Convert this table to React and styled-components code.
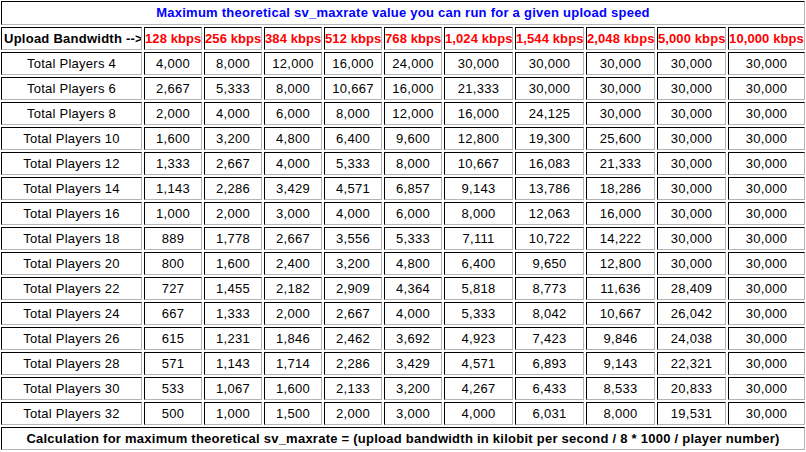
import React from 'react';
import styled, { createGlobalStyle } from 'styled-components';

const GlobalStyle = createGlobalStyle`
  html, body {
    margin: 0;
    padding: 0;
    background: #fff;
    overflow: hidden;
  }
`;

const Sheet = styled.table`
  border-collapse: separate;
  border-spacing: 2px;
  table-layout: fixed;
  width: 808px;
  margin: -1px;
  font-family: "Liberation Sans", Arial, sans-serif;
  font-size: 13px;
  line-height: 15px;
  letter-spacing: 0.25px;
`;

const Col = styled.col`
  width: ${(p) => p.$w}px;
`;

const Cell = styled.td`
  border: 1px solid;
  border-color: #000 #b4b4b4 #b4b4b4 #000;
  padding: 3px 1px;
  text-align: center;
  color: #000;
  white-space: nowrap;
  overflow: hidden;
`;

const TitleCell = styled(Cell)`
  color: #0000ff;
  font-weight: bold;
  padding: 3px 1px 4px;
`;

const HeadCell = styled(Cell)`
  font-weight: bold;
  color: ${(p) => (p.$rate ? '#ff0000' : '#000')};
  text-align: ${(p) => (p.$rate ? 'center' : 'left')};
  padding-left: ${(p) => (p.$rate ? 0 : 2)}px;
  padding-right: ${(p) => (p.$rate ? 0 : 1)}px;
  letter-spacing: ${(p) => (p.$rate ? 0.1 : 0.25)}px;
`;

const FootCell = styled(Cell)`
  font-weight: bold;
`;

// upload speeds in kbps and the widths their columns take
const rates = [128, 256, 384, 512, 768, 1024, 1544, 2048, 5000, 10000];
const widths = [141, 58, 58, 58, 58, 58, 69, 69, 69, 69, 77];
const players = [4, 6, 8, 10, 12, 14, 16, 18, 20, 22, 24, 26, 28, 30, 32];

const fmt = (n) => String(n).replace(/\B(?=(\d{3})+(?!\d))/g, ',');

const maxrate = (kbps, count) => Math.min(30000, Math.round((kbps * 1000) / 8 / count));

export default function App() {
  return (
    <>
      <GlobalStyle />
      <Sheet>
        <colgroup>
          {widths.map((w, i) => (
            <Col key={i} $w={w} />
          ))}
        </colgroup>
        <tbody>
          <tr>
            <TitleCell colSpan={11}>
              Maximum theoretical sv_maxrate value you can run for a given upload speed
            </TitleCell>
          </tr>
          <tr>
            <HeadCell>Upload Bandwidth --&gt;</HeadCell>
            {rates.map((r) => (
              <HeadCell key={r} $rate>
                {fmt(r)} kbps
              </HeadCell>
            ))}
          </tr>
          {players.map((p) => (
            <tr key={p}>
              <Cell>Total Players {p}</Cell>
              {rates.map((r) => (
                <Cell key={r}>{fmt(maxrate(r, p))}</Cell>
              ))}
            </tr>
          ))}
          <tr>
            <FootCell colSpan={11}>
              Calculation for maximum theoretical sv_maxrate = (upload bandwidth in kilobit per second / 8 * 1000 / player number)
            </FootCell>
          </tr>
        </tbody>
      </Sheet>
    </>
  );
}
